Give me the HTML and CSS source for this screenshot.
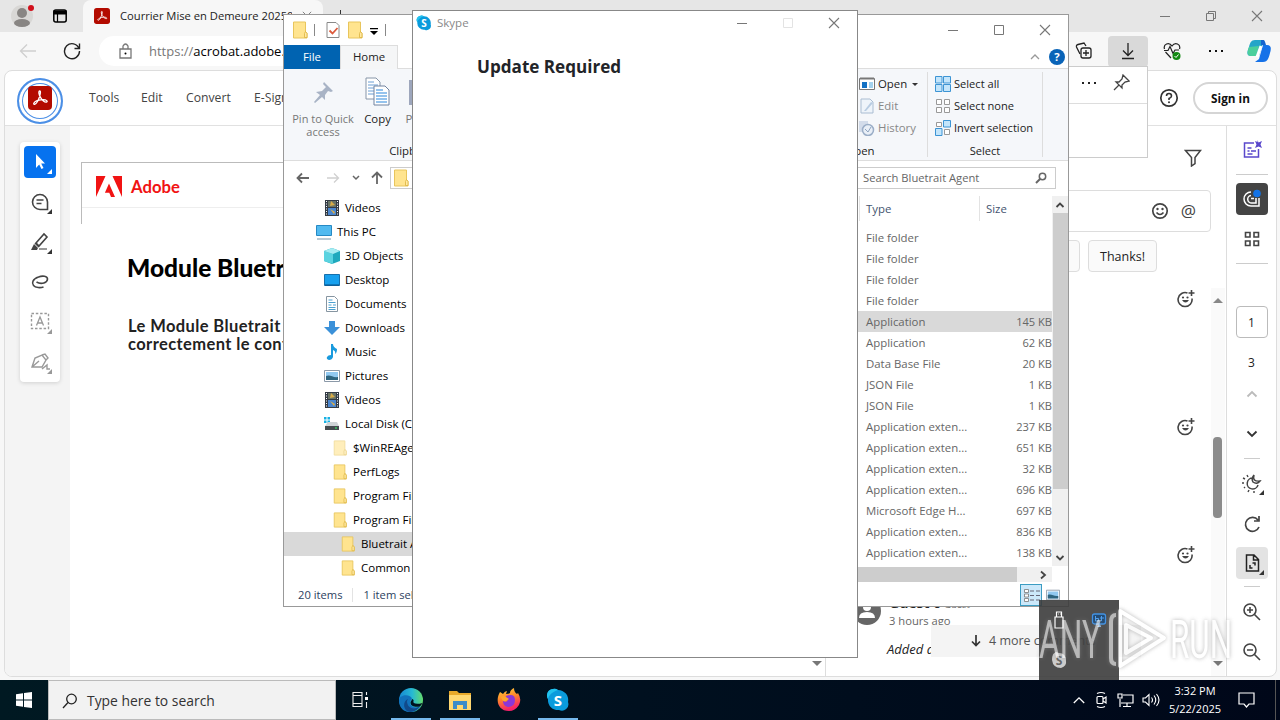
FILE: index.html
```
<!DOCTYPE html>
<html lang="en">
<head>
  <meta charset="utf-8">
  <title>Desktop</title>
  <link rel="stylesheet" href="styles.css">
</head>
<body>
<!-- shared icons -->
<svg class="sprite">
  <symbol id="folder" viewBox="0 0 16 18"><path d="M1.500 1h12v10l1.500 1v5H1.500z" fill="#ffe48f" stroke="#e8c55c"/><path d="M12.500 16.500v-4l1-2 1.500 2v4z" fill="#ffe9a5" stroke="#dcb33d" stroke-width=".8"/></symbol>
  <symbol id="acrobat" viewBox="0 0 24 24"><rect width="24" height="24" rx="4" fill="#b30b00"/><path d="M11.800 5c-1.700.2-.8 4 .7 6.300 1.500 2.500 4.300 5 6 4.700s.3-2.600-4-2.300c-4 .3-8 2-8.700 3.600s1.700 1.700 3.700-1.800c2-3.700 4-10.700 2.300-10.500z" fill="none" stroke="#fff" stroke-width="1.300"/></symbol>
  <symbol id="skype" viewBox="0 0 24 24"><path d="M7 1a6.500 6.500 0 0 1 5 1 10 10 0 0 1 10 12A6.500 6.500 0 0 1 13 22 10 10 0 0 1 2 11 6.500 6.500 0 0 1 7 1z" fill="#0a9bdc"/><path d="M7 1a6.500 6.500 0 0 1 5 1C6 4 3 7 2 11A6.500 6.500 0 0 1 7 1z" fill="#22c3ee"/><text x="12" y="17.500" text-anchor="middle" class="logo-s">S</text></symbol>
  <symbol id="video" viewBox="0 0 16 16"><path d="M1 0h14v16H1z" fill="#333b45"/><path d="M4 1h8v6H4z" fill="#6a7465"/><path d="M4 8h8v7H4z" fill="#4a86cf"/><path d="M7 1l4 4-5 1zM6 9l5 3-1 2z" fill="#d9ac47"/><path d="M2.500 1v15M13.500 1v15" stroke="#fff" stroke-dasharray="1 1.500"/></symbol>
  <symbol id="picture" viewBox="0 0 16 16"><path d="M.5 2.500h15v11H.5z" fill="#fff" stroke="#8b99a8"/><path d="M2 4h12v8H2z" fill="#91c9f1"/><path d="M2 8c4-2 7 2 12 1v3H2z" fill="#2e6580"/></symbol>
  <symbol id="smile" viewBox="0 0 18 18"><g fill="none" stroke="#444" stroke-width="1.700"><circle cx="9" cy="9" r="7.200"/><path d="M5.500 10.500q3.500 4 7 0"/></g><circle cx="6.500" cy="7" r="1.200" fill="#444"/><circle cx="11.500" cy="7" r="1.200" fill="#444"/></symbol>
  <symbol id="react" viewBox="0 0 18 18"><g fill="none" stroke="#444" stroke-width="1.600"><path d="M10.500 3A7 7 0 1 0 15 8.500M14.500 0v6M11.500 3h6"/></g><path d="M5 10h7q-3.500 5-7 0z" fill="#444"/><circle cx="6" cy="7.500" r="1.100" fill="#444"/><circle cx="10.500" cy="7.500" r="1.100" fill="#444"/></symbol>
  <symbol id="min" viewBox="0 0 12 12"><path d="M1 6.500h10" stroke="#777"/></symbol>
  <symbol id="max" viewBox="0 0 12 12"><path d="M1.500 1.500h9v9h-9z" fill="none" stroke="#777"/></symbol>
  <symbol id="close" viewBox="0 0 12 12"><path d="M1 1l10 10M11 1L1 11" stroke="#777" stroke-width="1.100"/></symbol>
  <symbol id="corner" viewBox="0 0 5 5"><path d="M5 0v5H0z" fill="currentColor"/></symbol>
</svg>

<div class="desktop">

  <!-- browser -->
  <div class="edge">
    <div class="tabs">
      <svg class="profile" viewBox="0 0 24 24"><circle cx="11" cy="12" r="11" fill="#d8d7d5"/><circle cx="11" cy="9" r="5" fill="#888583"/><ellipse cx="11" cy="19" rx="8" ry="4" fill="#888583"/><circle cx="20" cy="4" r="3" fill="#d1101c"/></svg>
      <svg class="tabicon" viewBox="0 0 14 14"><rect x=".8" y="1" width="12.400" height="12" rx="2" fill="none" stroke="#000" stroke-width="1.500"/><path d="M1 2h12v3H1zM4.500 4v9" stroke="#000" stroke-width="1.200"/></svg>
      <div class="tab">
        <svg width="16" height="16"><use href="#acrobat"/></svg>
        <span>Courrier Mise en Demeure 20250</span>
        <svg class="tab-close" viewBox="0 0 12 12"><use href="#close"/></svg>
      </div>
      <svg class="newtab" width="12" height="12" viewBox="0 0 12 12"><path d="M6.500 0v12M1 6.500h11" stroke="#333"/></svg>
      <div class="edge-controls">
        <svg width="12" height="12"><use href="#min"/></svg>
        <svg width="12" height="12" viewBox="0 0 12 12"><path d="M1.500 3.500h7v7h-7zM3.500 3V1.500h7v7H9" fill="none" stroke="#777"/></svg>
        <svg width="12" height="12"><use href="#close"/></svg>
      </div>
    </div>

    <div class="toolbar">
      <svg class="back" viewBox="0 0 18 16"><path d="M17 8H2M8 1.500L1.500 8 8 14.500" fill="none" stroke="#cfcfcf" stroke-width="1.300"/></svg>
      <svg class="reload" viewBox="0 0 18 18"><path d="M16 6.500A7.500 7.500 0 1 0 16.500 9M16.500 1.500v5h-5" fill="none" stroke="#222" stroke-width="1.400"/></svg>
      <div class="address">
        <svg width="13" height="16" viewBox="0 0 13 16"><path d="M1 6h11v9H1zM4 6V3q2.500-4 5 0v3" fill="none" stroke="#777" stroke-width="1.300"/><circle cx="6.500" cy="10.500" r="1"/></svg>
        <span>https://<b>acrobat.adobe.com</b></span>
      </div>
      <div class="actions">
        <div class="action"><svg width="18" height="18" viewBox="0 0 18 18"><g fill="none" stroke="#222" stroke-width="1.300"><rect x="6" y="6" width="10" height="10" rx="2"/><path d="M11 8v6M8 11h6M5 12L1.500 5Q1 3 3 2.500l6-1.500 2 3"/></g></svg></div>
        <div class="action on"><svg width="18" height="18" viewBox="0 0 18 18"><path d="M9 1v12M4 8.500l5 5 5-5M3 16.500h12" fill="none" stroke="#222" stroke-width="1.300"/></svg></div>
        <div class="action"><svg width="18" height="18" viewBox="0 0 18 18"><path d="M8 16L2.500 10M1.500 7C0 2 6-.5 9 4c3-4.500 9-2 7.500 3M1 8.500h4l2-4 3 7 2-3.500h4" fill="none" stroke="#222" stroke-width="1.200"/><circle cx="13.500" cy="14" r="4" fill="#138a13"/><path d="M11.500 14l1.500 1.500 2.500-3" fill="none" stroke="#fff"/></svg></div>
        <div class="action"><svg width="18" height="18" viewBox="0 0 18 18"><path d="M2 9h2M8 9h2M14 9h2" stroke="#111" stroke-width="2"/></svg></div>
        <div class="action"><svg width="24" height="24" viewBox="0 0 24 24"><path d="M8 1h9l-5 16H4c-5 0-4-4-2-9 1-4 2-7 6-7z" fill="#25a5c9"/><path d="M2 8l10-1-3 10H4c-4 0-4-4-2-9z" fill="#4bcf9c"/><path d="M16 6h4c5 0 4 5 3 8-1 4-2 9-7 9H8l4-3z" fill="#1672e8"/><path d="M14 1h2c2 0 2 2 3 5h-5z" fill="#1464ce"/><path d="M14 7l-4 11" stroke="#fff" stroke-width="3"/></svg></div>
      </div>
    </div>

    <div class="app">
      <div class="app-header">
        <div class="app-logo"><svg width="24" height="24"><use href="#acrobat"/></svg></div>
        <span class="m-tools">Tools</span><span class="m-edit">Edit</span><span class="m-convert">Convert</span><span class="m-sign">E-Sign</span>
        <div class="account">
          <svg width="20" height="20" viewBox="0 0 20 20"><circle cx="10" cy="10" r="8.200" fill="none" stroke="#333" stroke-width="1.700"/><path d="M7.500 8q0-2.500 2.500-2.500T12.500 8q0 1.500-2.500 2.500v1.500" fill="none" stroke="#333" stroke-width="1.600"/><circle cx="10" cy="14.200" r="1" fill="#333"/></svg>
          <div class="signin">Sign in</div>
        </div>
      </div>

      <div class="app-body">
        <div class="rail">
          <div class="tools">
            <div class="tool active"><svg viewBox="0 0 20 20"><path d="M6 2v14l3.200-3.500L11.500 17l2-1-2.300-4.500H15z" fill="#fff"/></svg><svg class="corner"><use href="#corner"/></svg></div>
            <div class="tool"><svg viewBox="0 0 20 20"><path d="M10 2.500a7.500 7.500 0 1 0 0 15h7.500V10A7.500 7.500 0 0 0 10 2.500zM6.500 8h7M6.500 11.500h5" fill="none" stroke="#444" stroke-width="1.600"/></svg><svg class="corner"><use href="#corner"/></svg></div>
            <div class="tool"><svg viewBox="0 0 20 20"><path d="M6 11l8-9 3 3-8 9zM5 11l4 4" fill="none" stroke="#444" stroke-width="1.600"/><path d="M4 12l4 4-1 2H1z" fill="#444"/><path d="M9 17h8" stroke="#999" stroke-width="2"/></svg><svg class="corner"><use href="#corner"/></svg></div>
            <div class="tool"><svg viewBox="0 0 20 20"><path d="M6.500 10c5 3 11 .5 11-3 0-3-5-3.500-9-2-6 2-7 6-5 8.500 2 2.500 7 2.500 10 1.500" fill="none" stroke="#444" stroke-width="1.600"/></svg></div>
            <div class="tool off"><svg viewBox="0 0 20 20"><path d="M1.500 1.500h17v15h-17z" fill="none" stroke="#999" stroke-width="1.400" stroke-dasharray="2.500 1.800"/><path d="M6.500 13.500L10 5l3.500 8.500M7.500 11h5" fill="none" stroke="#999" stroke-width="1.300"/></svg><svg class="corner"><use href="#corner"/></svg></div>
            <div class="tool off"><svg viewBox="0 0 20 20"><path d="M2 15L5 6l7-3 4 5-4 7zM2 15l7-6M12 3l3-1 3 4-2 2M12 17l5-4v4h3" fill="none" stroke="#999" stroke-width="1.400"/></svg><svg class="corner"><use href="#corner"/></svg></div>
          </div>
        </div>

        <div class="document">
          <div class="sheet">
            <div class="brand"><svg width="26" height="21" viewBox="0 0 26 21"><path d="M0 0h9.500L0 21zM16.500 0H26v21zM13 7.500L19 21h-4l-1.700-4.200H8.900z" fill="#f11313"/></svg>Adobe</div>
          </div>
          <div class="doc-title">Module Bluetrait</div>
          <div class="doc-text">Le Module Bluetrait permet<br>correctement le contenu</div>
        </div>

        <div class="comments">
          <svg class="filter" viewBox="0 0 18 18"><path d="M1.500 1.500h15L11 8.500v6L7.500 17V8.500z" fill="none" stroke="#444" stroke-width="1.500"/></svg>
          <div class="reply"><svg width="18" height="18"><use href="#smile"/></svg><span>@</span></div>
          <div class="chips"><div class="chip"></div><div class="chip">Thanks!</div></div>
          <div class="reactions">
            <svg><use href="#react"/></svg><svg><use href="#react"/></svg><svg><use href="#react"/></svg>
          </div>
          <div class="comment-scroll"><i class="up"></i><i class="thumb"></i><i class="down"></i></div>
          <div class="guest">
            <svg width="28" height="28" viewBox="0 0 28 28"><circle cx="14" cy="14" r="14" fill="#666"/><circle cx="14" cy="10" r="4" fill="#fff"/><path d="M6 21q0-6 8-6t8 6z" fill="#fff"/></svg>
            <div><b>Guest 0</b> <small>Guest</small><br><span>3 hours ago</span><p>Added a</p></div>
          </div>
          <div class="more">
            <svg width="12" height="12" viewBox="0 0 12 12"><path d="M6 0v10M2 6.500l4 4 4-4" fill="none" stroke="#333" stroke-width="1.700"/></svg>4 more comments
          </div>
        </div>

        <div class="siderail">
          <div class="side"><svg viewBox="0 0 20 20"><path d="M12 3H2.500v14h14V9M5.500 8h4M5.500 11h2M9 11h5M5.500 14h5" fill="none" stroke="#5a48cc" stroke-width="1.500"/><path d="M15.500 0l1 2.500L20 1l-1.500 3.500L20 8l-3.500-1.500L13 8l1.500-3.500L13 1l2.500 1z" fill="#5a48cc"/></svg></div>
          <hr class="h1">
          <div class="side dark"><svg viewBox="0 0 20 20"><path d="M9 3a7 7 0 0 0 0 14h8V9M9 6.500a3.700 3.700 0 0 0 1 7.500h4V9M9 9.500h3" fill="none" stroke="#fff" stroke-width="1.500"/><circle cx="15" cy="4.500" r="3.800" fill="#1473e6"/></svg></div>
          <div class="side grid4"><svg viewBox="0 0 20 20"><path d="M3.500 3.500h4.500v4.500H3.500zM12 3.500h4.500v4.500H12zM3.500 12h4.500v4.500H3.500zM12 12h4.500v4.500H12z" fill="none" stroke="#444" stroke-width="1.600"/></svg></div>
          <hr class="h2">
          <div class="page-no">1</div>
          <div class="pages">3</div>
          <svg class="chev" viewBox="0 0 12 8"><path d="M1.500 6.500L6 2l4.500 4.500" fill="none" stroke="#bbb" stroke-width="1.800"/></svg>
          <svg class="chev dn" viewBox="0 0 12 8"><path d="M1.500 1.500L6 6l4.500-4.500" fill="none" stroke="#333" stroke-width="1.800"/></svg>
          <hr class="short">
          <div class="side"><svg viewBox="0 0 20 20"><path d="M11 5a5.500 5.500 0 1 0 5 7M12 2q-2 7 6 6-3 4-7 1-2-3 1-7z" fill="none" stroke="#444" stroke-width="1.500"/><path d="M5 2l1 2M1 5l2 1M0 10h2M2 15l1-1M6 19l1-2M12 18v2" stroke="#444" stroke-width="1.400"/></svg><svg class="corner"><use href="#corner"/></svg></div>
          <div class="side refresh"><svg viewBox="0 0 20 20"><path d="M16 6A7 7 0 1 0 17 13M17 2v5h-5" fill="none" stroke="#444" stroke-width="1.700"/></svg></div>
          <div class="side fit"><svg viewBox="0 0 20 20"><path d="M4.500 2h7.500l4.500 4.500V18h-12zM11.500 2.500v4.500h4.500M8 12v3h2.500M13 12.500V10h-2.500" fill="none" stroke="#222" stroke-width="1.500"/></svg><svg class="corner"><use href="#corner"/></svg></div>
          <hr class="short">
          <div class="side"><svg viewBox="0 0 20 20"><path d="M12.500 12.500L18 18M5 8h6M8 5v6" stroke="#444" stroke-width="1.600"/><circle cx="8" cy="8" r="6" fill="none" stroke="#444" stroke-width="1.600"/></svg></div>
          <div class="side"><svg viewBox="0 0 20 20"><path d="M12.500 12.500L18 18M5 8h6" stroke="#444" stroke-width="1.600"/><circle cx="8" cy="8" r="6" fill="none" stroke="#444" stroke-width="1.600"/></svg></div>
        </div>
      </div>
    </div>
    <i class="doc-down"></i>

    <!-- downloads flyout -->
    <div class="flyout">
      <div class="flyout-head">
        <svg width="14" height="4" viewBox="0 0 14 4"><path d="M0 2h2M6 2h2M12 2h2" stroke="#222" stroke-width="2"/></svg>
        <svg width="17" height="17" viewBox="0 0 17 17"><path d="M10 1l6 6-4 1-3 3v3L3 8h3l3-3zM6 11l-5 5" fill="none" stroke="#444" stroke-width="1.300"/></svg>
      </div>
    </div>
  </div>

  <!-- file explorer -->
  <div class="explorer">
    <div class="ex-title">
      <svg width="16" height="18"><use href="#folder"/></svg><i class="sep"></i>
      <svg class="check" width="14" height="16" viewBox="0 0 14 16"><path d="M1 .5h9l3 3v12H1z" fill="#fff" stroke="#888"/><path d="M3.500 8.500l3 3 5-5.500" fill="none" stroke="#dc5a3c" stroke-width="1.800"/></svg>
      <svg width="16" height="18"><use href="#folder"/></svg>
      <svg class="drop" width="8" height="8" viewBox="0 0 8 8"><path d="M0 0h8v1.300H0zM0 3h8L4 7z"/></svg><i class="sep last"></i>
      <div class="controls"><svg><use href="#min"/></svg><svg><use href="#max"/></svg><svg><use href="#close"/></svg></div>
    </div>
    <div class="ex-tabs"><span class="file">File</span><span class="home">Home</span>
      <div class="ex-help"><svg width="10" height="7" viewBox="0 0 10 7"><path d="M1 6l4-4 4 4" fill="none" stroke="#999" stroke-width="1.300"/></svg><b>?</b></div>
    </div>
    <div class="ribbon">
      <div class="group clip">
        <div class="big pin"><svg width="22" height="24" viewBox="0 0 22 24"><path d="M12 1l9 9-2 1-3-1-3 4v5l-3-3-7 6-1-1 6-7-4-3 6-1 4-4-3-3z" fill="#a8b3c5"/></svg>Pin to Quick<br>access</div>
        <div class="big copy"><svg width="26" height="30" viewBox="0 0 26 30"><path d="M1 1h10l4 4v17H1z" fill="#fff" stroke="#8695a8"/><path d="M3 8h10M3 11h10M3 14h10M3 17h10M3 5h6" stroke="#6a9ed4"/><path d="M9 9h11l4 4v15H9z" fill="#fff" stroke="#7083a0"/><path d="M11 16h11M11 19h11M11 22h11M11 25h11M11 13h7" stroke="#2c87dc" stroke-width="1.200"/></svg>Copy</div>
        <div class="big paste"><svg width="22" height="30" viewBox="0 0 22 30"><path d="M0 3h22v25H0z" fill="#9da6bc"/></svg>Paste</div>
        <div class="caption">Clipboard</div>
      </div>
      <div class="group open">
        <div class="cmd"><svg viewBox="0 0 16 16"><path d="M.5 2.500h15v11H.5z" fill="#fff" stroke="#777"/><path d="M1 2.500h14" stroke="#777" stroke-width="2"/><path d="M3 6h5v6H3z" fill="#1572c4"/><path d="M10 7h4M10 9h4M10 11h4" stroke="#49a5de"/></svg>Open <i></i></div>
        <div class="cmd dim"><svg viewBox="0 0 16 16"><path d="M2 1h9l3 3v11H2z" fill="#eef4fa" stroke="#aabdd2"/><path d="M5 13l7-9 2 1-7 8z" fill="#b8cce2"/></svg>Edit</div>
        <div class="cmd dim"><svg viewBox="0 0 16 16"><path d="M0 1h9v11H0z" fill="#d3dcea"/><circle cx="9" cy="10" r="5.500" fill="#e9eff7" stroke="#9baec7" stroke-width="1.500"/><path d="M6 9l3 3 3-5" fill="none" stroke="#8fa5c1"/></svg>History</div>
        <div class="caption">Open</div>
      </div>
      <div class="group select">
        <div class="cmd"><svg viewBox="0 0 16 16"><path d="M.5.5h6.500v6.500H.5zM8.500.5h7v6.500h-7zM.5 8.500h6.500v7H.5zM8.500 8.500h7v7h-7z" fill="#c3e5fb" stroke="#3c94d4"/></svg>Select all</div>
        <div class="cmd"><svg viewBox="0 0 16 16"><path d="M1.500 1.500h5v5h-5zM9.500 1.500h5v5h-5zM1.500 9.500h5v5h-5zM9.500 9.500h5v5h-5z" fill="#fff" stroke="#999"/></svg>Select none</div>
        <div class="cmd"><svg viewBox="0 0 16 16"><path d="M1.500 2.500h5v4h-5zM9.500 9.500h5v5h-5z" fill="#fff" stroke="#999"/><path d="M8.500.5h7v6.500h-7zM.5 8.500h6.500v7H.5z" fill="#c3e5fb" stroke="#3c94d4"/></svg>Invert selection</div>
        <div class="caption">Select</div>
      </div>
    </div>
    <div class="nav">
      <svg width="14" height="12" viewBox="0 0 14 12"><path d="M13 6H2M6 1.500L1.500 6 6 10.500" fill="none" stroke="#666" stroke-width="1.800"/></svg>
      <svg class="fwd" width="14" height="12" viewBox="0 0 14 12"><path d="M1 6h11M8 1.500L12.500 6 8 10.500" fill="none" stroke="#d0d0d0" stroke-width="1.300"/></svg>
      <svg class="recent" width="8" height="6" viewBox="0 0 8 6"><path d="M1 1l3 3 3-3" fill="none" stroke="#666" stroke-width="1.500"/></svg>
      <svg class="upper" width="12" height="14" viewBox="0 0 12 14"><path d="M6 13V2M1 6.500l5-5 5 5" fill="none" stroke="#666" stroke-width="1.800"/></svg>
      <div class="path"><svg width="16" height="18"><use href="#folder"/></svg></div>
      <div class="search"><span>Search Bluetrait Agent</span><svg width="12" height="12" viewBox="0 0 12 12"><circle cx="7.500" cy="4.500" r="3.200" fill="none" stroke="#666" stroke-width="1.500"/><path d="M5 7L1 11" stroke="#666" stroke-width="1.900"/></svg></div>
    </div>
    <div class="panes">
      <div class="tree">
        <div class="node"><svg><use href="#video"/></svg>Videos</div>
        <div class="node root"><svg viewBox="0 0 16 16"><path d="M.5 1.500h15v10H.5z" fill="#51baf0" stroke="#2689c4"/><path d="M1 15h14" stroke="#7594a9"/></svg>This PC</div>
        <div class="node"><svg viewBox="0 0 16 16"><path d="M8 0l8 3v10l-8 3-8-3V3z" fill="#1fa9bd"/><path d="M0 3l9 3v10l-9-3z" fill="#5ad3e0"/><path d="M8 0l8 3-7 3-9-3z" fill="#a5ecf2"/></svg>3D Objects</div>
        <div class="node"><svg viewBox="0 0 16 16"><path d="M.5 2.500h15v11H.5z" fill="#17a0ee" stroke="#1770ac"/><path d="M1 13h14" stroke="#064e85"/></svg>Desktop</div>
        <div class="node"><svg viewBox="0 0 16 16"><path d="M2.500.5h8l3 3v12h-11z" fill="#fff" stroke="#8695a1"/><path d="M4.500 4h4M4.500 6.500h7M4.500 9h3M9 9h3M4.500 11.500h7M4.500 13.500h7" stroke="#4aa0d0"/></svg>Documents</div>
        <div class="node"><svg viewBox="0 0 16 16"><path d="M5 1h6v6h5l-8 8-8-8h5z" fill="#3b91d9"/></svg>Downloads</div>
        <div class="node"><svg viewBox="0 0 16 16"><path d="M7 0h2q0 3 4 5 0 4-2 5 1-3-2-4v7q-1 3-4 3-3-1-2-3 1-2 4-2z" fill="#199add"/></svg>Music</div>
        <div class="node"><svg><use href="#picture"/></svg>Pictures</div>
        <div class="node"><svg><use href="#video"/></svg>Videos</div>
        <div class="node"><svg viewBox="0 0 16 16"><path d="M0 1h2.500v2.500H0zM3.500 1H6v2.500H3.500zM0 4.500h2.500V7H0zM3.500 4.500H6V7H3.500z" fill="#16b1e4"/><path d="M4 6h9l2 4H1z" fill="#cfd4d7"/><path d="M1 10h14v4H1z" fill="#454c50"/><path d="M11 12h2" stroke="#3f6"/></svg>Local Disk (C:)</div>
        <div class="node sub faded"><svg><use href="#folder"/></svg>$WinREAgent</div>
        <div class="node sub"><svg><use href="#folder"/></svg>PerfLogs</div>
        <div class="node sub"><svg><use href="#folder"/></svg>Program Files</div>
        <div class="node sub"><svg><use href="#folder"/></svg>Program Files (x86)</div>
        <div class="node leaf selected"><svg><use href="#folder"/></svg>Bluetrait Agent</div>
        <div class="node leaf"><svg><use href="#folder"/></svg>Common Files</div>
      </div>
      <div class="files">
        <div class="file-head"><span>Type</span><span>Size</span></div>
        <div class="row"><span>File folder</span></div>
        <div class="row"><span>File folder</span></div>
        <div class="row"><span>File folder</span></div>
        <div class="row"><span>File folder</span></div>
        <div class="row selected"><span>Application</span><span>145 KB</span></div>
        <div class="row"><span>Application</span><span>62 KB</span></div>
        <div class="row"><span>Data Base File</span><span>20 KB</span></div>
        <div class="row"><span>JSON File</span><span>1 KB</span></div>
        <div class="row"><span>JSON File</span><span>1 KB</span></div>
        <div class="row"><span>Application exten...</span><span>237 KB</span></div>
        <div class="row"><span>Application exten...</span><span>651 KB</span></div>
        <div class="row"><span>Application exten...</span><span>32 KB</span></div>
        <div class="row"><span>Application exten...</span><span>696 KB</span></div>
        <div class="row"><span>Microsoft Edge H...</span><span>697 KB</span></div>
        <div class="row"><span>Application exten...</span><span>836 KB</span></div>
        <div class="row"><span>Application exten...</span><span>138 KB</span></div>
        <div class="hscroll"><i></i><svg width="8" height="10" viewBox="0 0 8 10"><path d="M2 1.500L6 5 2 8.500" fill="none" stroke="#444" stroke-width="1.800"/></svg></div>
      </div>
      <div class="vscroll">
        <svg width="10" height="8" viewBox="0 0 10 8"><path d="M1.500 6L5 2.500 8.500 6" fill="none" stroke="#444" stroke-width="1.800"/></svg>
        <i></i>
        <svg width="10" height="8" viewBox="0 0 10 8"><path d="M1.500 2L5 5.500 8.500 2" fill="none" stroke="#444" stroke-width="1.800"/></svg>
      </div>
    </div>
    <div class="status"><span>20 items</span><i></i><span>1 item selected</span>
      <div class="views"><div class="details"><svg width="16" height="14" viewBox="0 0 16 14"><path d="M.5.500h4v3h-4zM.5 5h4v3h-4zM.5 9.500h4v3h-4z" fill="#fff" stroke="#777" stroke-width=".8"/><path d="M6 2h4M6 6.500h4M6 11h4M12 2h4M12 6.500h4M12 11h4" stroke="#667"/></svg></div><svg width="14" height="14"><use href="#picture"/></svg></div>
    </div>
  </div>

  <!-- update dialog -->
  <div class="dialog">
    <div class="dialog-title">
      <svg class="app-icon"><use href="#skype"/></svg><span>Skype</span>
      <div class="controls"><svg><use href="#min"/></svg><svg class="disabled"><use href="#max"/></svg><svg><use href="#close"/></svg></div>
    </div>
    <h1>Update Required</h1>
  </div>

  <!-- tray overflow -->
  <div class="overflow">
    <svg viewBox="0 0 16 18"><path d="M5.500 1h5v5h-5zM4 6h8v11H4z" fill="none" stroke="#fff" stroke-width="1.200"/><path d="M7 3h.8M9 3h.8" stroke="#fff"/></svg>
    <svg viewBox="0 0 16 18"><rect x="1.500" y="3" width="13" height="10" rx="2" fill="#234b73" stroke="#4292e4" stroke-width="1.300"/><path d="M4.500 5v5h3V7.500h-3M10.500 5v5M9 7h4" fill="none" stroke="#4ea1f3"/><path d="M6 16l3-3 1 3z" fill="#9dcaf5"/></svg>
    <svg viewBox="0 0 16 16"><path d="M5 0l3 1q7 0 7 8 1 5-5 7-8 0-9-8 0-7 4-8z" fill="#ccc"/><text x="8" y="12.500" text-anchor="middle" class="tray-s">S</text></svg>
  </div>
  <svg class="watermark" viewBox="0 0 200 66">
    <text x="3" y="52" textLength="62" lengthAdjust="spacingAndGlyphs">ANY</text>
    <text x="134" y="52" textLength="62" lengthAdjust="spacingAndGlyphs">RUN</text>
    <path d="M80 9q-5 0-5 7v36q0 6 5 6M84 5l44 27-44 28zM90 19l25 13-25 15z"/>
  </svg>
</div>

<div class="taskbar">
  <div class="start"><svg width="16" height="16" viewBox="0 0 16 16"><path d="M0 2.300l7-1v6.300H0zM8 1.100L16 0v7.600H8zM0 8.500h7v6.300l-7-1zM8 8.500h8V16l-8-1.100z" fill="#fff"/></svg></div>
  <div class="tb-search"><svg width="16" height="16" viewBox="0 0 16 16"><circle cx="9.500" cy="6" r="4.800" fill="none" stroke="#222" stroke-width="1.300"/><path d="M6 9.500L1 15" stroke="#222" stroke-width="1.300"/></svg>Type here to search</div>
  <div class="tb-item"><svg width="18" height="18" viewBox="0 0 18 18"><path d="M2 4.500h9v8H2zM2 4V1M11 4V1M2 13v3M11 13v3M2 1.500h9M2 15.500h9M15.500 1v3M15.500 11v6" fill="none" stroke="#eee" stroke-width="1.100"/><path d="M14 6h3v3h-3z" fill="#fff"/></svg></div>
  <div class="tb-item running"><svg width="24" height="24" viewBox="0 0 24 24"><defs><linearGradient id="eg" x2="1"><stop stop-color="#1688d3"/><stop offset=".55" stop-color="#27b9d4"/><stop offset="1" stop-color="#64dc6c"/></linearGradient></defs><circle cx="12" cy="12" r="12" fill="url(#eg)"/><path d="M0 12c1-6 12-6 13-1-3 2-3 7 2 8 3 1 6-1 7-2-3 9-22 11-22-5z" fill="#1272bc"/><path d="M8 13c0 7 7 10 13 5-4 6-9 7-13 5-4-3-4-10 1-12z" fill="#114a8b"/><path d="M11.500 14.500c0-1.500 1.500-2 1.500-3.500 1 0 2 1 1.500 2-1 2 2 4 9 2-1 2-2 3-3 3.500-4 1-9 0-9-4z" fill="#001320"/></svg></div>
  <div class="tb-item running"><svg width="24" height="20" viewBox="0 0 24 20"><path d="M1 1h8l2 2h12v17H1z" fill="#e8a92a"/><path d="M1 5h22v15H1z" fill="#ffd871"/><path d="M5 11h14v8h-4v-4H9v4H5z" fill="#3c8dc9"/></svg></div>
  <div class="tb-item"><svg width="24" height="24" viewBox="0 0 24 24"><defs><linearGradient id="fg" x2=".3" y2="1"><stop stop-color="#ffd93b"/><stop offset=".5" stop-color="#ff842b"/><stop offset="1" stop-color="#f52169"/></linearGradient></defs><path d="M3 4l3 2q2-3 4-3l-1 3q3 0 4-1 0-3 4-5 0 4 3 6l1-1q4 6 1 12-4 6-10 6C1 23-2 12 3 4z" fill="url(#fg)"/><path d="M9 8q9-3 9 4t-7 7q-5-1-5-6l3 1 2-2-3-1z" fill="#8b36d8"/><path d="M4 9q3-2 5 0l3 2-3 2q-4 1-5-4z" fill="#ffa52d"/></svg></div>
  <div class="tb-item running"><svg width="24" height="24"><use href="#skype"/></svg></div>
  <div class="tray">
    <svg width="12" height="8" viewBox="0 0 12 8"><path d="M.8 7L6 1.800 11.200 7" fill="none" stroke="#fff" stroke-width="1.300"/></svg>
    <svg width="16" height="18" viewBox="0 0 16 18"><rect x="4" y="5.500" width="6" height="7" rx="1" fill="none" stroke="#fff" stroke-width="1.200"/><path d="M10 8l3-2v6l-3-2M4 2.500q4-2 8 0M4 15.500q4 2 8 0" fill="none" stroke="#fff" stroke-width="1.200"/></svg>
    <svg width="17" height="16" viewBox="0 0 17 16"><path d="M6 3h10v8H4M10 11v3M6 14.500h8M3 7v8M1 2h4v4H1z" fill="none" stroke="#fff" stroke-width="1.200"/></svg>
    <svg width="18" height="14" viewBox="0 0 18 14"><path d="M1 5h2.500L7 1.500v11L3.500 9H1zM9.500 4.500q2 2.500 0 5M12 2.500q3.500 4.500 0 9M14.500 1q5 6 0 12" fill="none" stroke="#fff" stroke-width="1.100"/></svg>
    <div class="clock">3:32 PM<br>5/22/2025</div>
    <svg class="notes" width="17" height="16" viewBox="0 0 17 16"><path d="M1 1h15v11h-5l-2.500 3L6 12H1z" fill="none" stroke="#fff" stroke-width="1.200"/></svg>
  </div>
</div>
</body>
</html>
```
FILE: styles.css
```
* {
  box-sizing: border-box;
}

body {
  margin: 0;
  width: 1280px;
  height: 720px;
  overflow: hidden;
  font: 12px/16px "Open Sans", "Noto Sans", sans-serif;
  color: #222;
}

svg {
  flex: none;
  display: block;
}

i {
  display: block;
  flex: none;
}

.sprite {
  display: none;
}

.logo-s {
  font: bold 15px "Open Sans", sans-serif;
  fill: #fff;
}

.desktop {
  position: relative;
  height: 680px;
  overflow: hidden;
}

/* browser */
.edge {
  height: 680px;
  background: #f7f7f7;
}

.tabs {
  display: flex;
  height: 32px;
  align-items: center;
  background: #e6e6e6;
}

.profile {
  width: 24px;
  height: 24px;
  margin-left: 11px;
}

.tabicon {
  width: 14px;
  height: 14px;
  margin: 0 16px 0 18px;
}

.tab {
  display: flex;
  align-items: center;
  gap: 10px;
  width: 240px;
  height: 32px;
  padding: 0 11px;
  background: #f7f7f7;
  border-radius: 8px 8px 0 0;
}

.tab span {
  width: 172px;
  overflow: hidden;
  white-space: nowrap;
  font-size: 11.2px;
}

.tab-close {
  width: 10px;
  height: 10px;
}

.newtab {
  margin-left: 11px;
}

.edge-controls {
  display: flex;
  gap: 34px;
  margin-left: auto;
  margin-right: 17px;
}

.toolbar {
  display: flex;
  align-items: center;
  height: 38px;
}

.back {
  width: 18px;
  height: 16px;
  margin-left: 19px;
}

.reload {
  width: 18px;
  height: 18px;
  margin-left: 26px;
}

.address {
  display: flex;
  align-items: center;
  gap: 17px;
  width: 700px;
  height: 30px;
  margin-left: 18px;
  padding-left: 20px;
  background: #fff;
  border-radius: 15px;
  font-size: 13px;
  color: #777;
}

.address b {
  font-weight: normal;
  color: #000;
}

.actions {
  display: flex;
  margin-left: auto;
  gap: 4px;
}

.action {
  display: flex;
  align-items: center;
  justify-content: center;
  width: 40px;
  height: 31px;
  border-radius: 4px;
}

.action.on {
  background: #d9d9d9;
}

.action:last-child {
  width: 37px;
  margin-right: 3px;
}

.app {
  display: flex;
  flex-direction: column;
  height: 607px;
  margin: 0 3px 0 4px;
  background: #fff;
  border: 1px solid #ddd;
  border-radius: 8px;
  overflow: hidden;
}

.app-header {
  display: flex;
  align-items: center;
  height: 55px;
  flex: none;
  border-bottom: 1px solid #e1e1e1;
  font-size: 12.2px;
  color: #444;
}

.app-logo {
  display: flex;
  align-items: center;
  justify-content: center;
  width: 46px;
  height: 46px;
  margin: 5px 0 0 12px;
  border: 2px solid #4b8fe6;
  border-radius: 50%;
  box-shadow: inset 0 0 0 3px #fff, inset 0 0 0 4px #4b8fe6;
}

.app-logo svg {
  margin-top: -6px;
}

.app-header span {
  flex: none;
}

.m-tools { width: 52px; margin-left: 26px; }
.m-edit { width: 45px; }
.m-convert { width: 68px; }

.account {
  display: flex;
  align-items: center;
  gap: 14px;
  margin-left: auto;
  margin-right: 8px;
}

.signin {
  width: 75px;
  height: 32px;
  border: 2px solid #d5d5d5;
  border-radius: 16px;
  line-height: 28px;
  text-align: center;
  color: #111;
  font-weight: bold;
  font-size: 11.8px;
}

.app-body {
  display: flex;
  flex: 1;
  min-height: 0;
}

.rail {
  width: 65px;
  flex: none;
  padding: 16px 0 0 15px;
  background: #f4f4f4;
}

.tools {
  width: 40px;
  height: 240px;
  padding: 4px;
  display: flex;
  flex-direction: column;
  gap: 8px;
  background: #fff;
  border-radius: 4px;
  box-shadow: 0 1px 4px rgba(0,0,0,.15);
}

.tool, .side {
  position: relative;
  display: flex;
  align-items: center;
  justify-content: center;
  width: 32px;
  height: 32px;
  flex: none;
  border-radius: 4px;
  color: #333;
}

.tool > svg, .side > svg {
  width: 20px;
  height: 20px;
}

.tool > .corner, .side > .corner {
  position: absolute;
  right: 4px;
  bottom: 4px;
  width: 5px;
  height: 5px;
}

.tool.active {
  background: #0672ef;
  color: #fff;
}

.tool.off {
  color: #999;
}

.document {
  width: 755px;
  flex: none;
  overflow: hidden;
}

.sheet {
  height: 62px;
  margin: 36px 0 0 11px;
  border: solid #bbb;
  border-width: 1px 0 0 1px;
}

.brand {
  display: flex;
  align-items: center;
  gap: 9px;
  height: 45px;
  padding: 3px 0 0 14px;
  border-bottom: 1px solid #eee;
  font: bold 16.7px/20px Lato, sans-serif;
  color: #f11313;
}

.doc-title {
  margin: 29px 0 0 57px;
  font: 900 24.5px/30px Lato, sans-serif;
  color: #000;
}

.doc-text {
  margin: 34px 0 0 58px;
  font: bold 16.5px/18px Lato, sans-serif;
  letter-spacing: .4px;
  color: #222;
}

.comments {
  position: relative;
  flex: 1;
  border-left: 1px solid #ddd;
}

.filter {
  width: 18px;
  height: 18px;
  margin: 23px 0 0 358px;
}

.reply {
  display: flex;
  align-items: center;
  justify-content: flex-end;
  gap: 12px;
  height: 42px;
  margin: 23px 15px 0 20px;
  padding-right: 14px;
  border: 1px solid #ddd;
  border-radius: 4px;
  font-size: 17px;
  color: #444;
}

.chips {
  display: flex;
  justify-content: flex-end;
  gap: 8px;
  margin: 8px 69px 0 0;
}

.chip {
  width: 69px;
  height: 32px;
  border: 1px solid #ddd;
  border-radius: 4px;
  background: #fafafa;
  font-size: 12.5px;
  line-height: 31px;
  text-align: center;
}

.reactions {
  display: flex;
  flex-direction: column;
  gap: 110px;
  margin: 18px 0 0 351px;
}

.reactions svg {
  width: 18px;
  height: 18px;
}

/* lies over the right edge of the comment list */
.comment-scroll {
  position: absolute;
  top: 162px;
  right: 1px;
  bottom: 0;
  width: 14px;
  background: #fafafa;
}

.up, .down, .doc-down {
  width: 0;
  height: 0;
  border: 5px solid transparent;
}

.up {
  margin: 10px auto 0 2px;
  border-bottom-color: #888;
  border-top: 0;
}

.thumb {
  width: 9px;
  height: 81px;
  margin: 134px 0 0 2px;
  border-radius: 4px;
  background: #8b8b8b;
}

.down {
  margin: 143px 0 0 2px;
  border-top-color: #777;
  border-bottom: 0;
}

.guest {
  display: flex;
  gap: 8px;
  margin: 33px 0 0 27px;
  font-size: 11.2px;
  color: #666;
}

.guest b {
  font-size: 14px;
  color: #222;
}

.guest div {
  margin-top: -2px;
}

.guest p {
  margin: 12px 0 0 -2px;
  font-size: 13px;
  font-style: italic;
  color: #222;
}

/* covers the tail of the last comment */
.more {
  position: absolute;
  left: 105px;
  bottom: 19px;
  width: 210px;
  height: 32px;
  display: flex;
  align-items: center;
  gap: 7px;
  padding-left: 39px;
  background: #f4f4f4;
  color: #555;
  font-size: 12.5px;
}

.siderail {
  width: 50px;
  flex: none;
  display: flex;
  flex-direction: column;
  align-items: center;
  padding-top: 8px;
  border-left: 1px solid #ddd;
}

.siderail hr {
  width: 32px;
  margin: 8px 0;
  border: 0;
  border-top: 1px solid #ccc;
}

.siderail .h2 { margin: 8px 0 42px; }
.siderail .short { width: 16px; margin: 7px 0 8px; }
.grid4 { margin-top: 8px; }
.side.dark { background: #444; }

.page-no {
  width: 32px;
  height: 32px;
  border: 1px solid #bbb;
  border-radius: 4px;
  text-align: center;
  line-height: 31px;
}

.pages {
  margin: 17px 0 19px;
}

.chev {
  width: 12px;
  height: 8px;
}

.chev.dn {
  margin: 32px 0 13px;
}

.refresh { margin-top: 9px; }
.fit { margin-top: 7px; }
.fit + .short { margin-bottom: 9px; }
.side.fit { background: #e3e3e3; }
.fit ~ .side:last-child { margin-top: 8px; }

.doc-down {
  position: absolute;
  left: 812px;
  top: 661px;
  border-top-color: #777;
  border-bottom: 0;
}

.flyout {
  position: absolute;
  left: 860px;
  top: 66px;
  width: 288px;
  height: 92px;
  background: #fff;
  border: 1px solid #ccc;
}

.flyout-head {
  display: flex;
  align-items: center;
  justify-content: flex-end;
  gap: 17px;
  height: 37px;
  padding: 0 17px 5px 0;
  border-bottom: 1px solid #ddd;
}

/* file explorer */
.explorer {
  position: absolute;
  left: 283px;
  top: 14px;
  width: 786px;
  height: 593px;
  display: flex;
  flex-direction: column;
  background: #fff;
  border: 1px solid #999;
  font-size: 11.4px;
}

.ex-title {
  display: flex;
  align-items: center;
  height: 30px;
  padding: 0 0 1px 8px;
}

.sep {
  width: 1px;
  height: 12px;
  margin: 0 11px 0 6px;
  background: #888;
}

.check { margin-right: 7px; }
.drop { margin: 4px 7px 0 7px; }
.sep.last { margin: 0; }

.controls {
  display: flex;
  gap: 34px;
  margin-left: auto;
  margin-right: 17px;
}

.controls svg {
  width: 12px;
  height: 12px;
}

.ex-tabs {
  display: flex;
  height: 24px;
  border-bottom: 1px solid #ddd;
}

.file, .home {
  width: 56px;
  height: 24px;
  line-height: 24px;
  text-align: center;
  background: #0063b1;
  color: #fff;
}

.home {
  width: 58px;
  line-height: 22px;
  border: 1px solid #ddd;
  border-bottom: 0;
  background: #f5f6f7;
  color: #222;
}

.ex-help {
  display: flex;
  align-items: center;
  gap: 9px;
  margin: 0 3px 0 auto;
}

.ex-help b {
  width: 16px;
  height: 16px;
  border-radius: 50%;
  background: #0a64b8;
  color: #fff;
  text-align: center;
}

.ribbon {
  display: flex;
  height: 92px;
  flex: none;
  padding-right: 25px;
  background: #f5f7fa;
  border-bottom: 1px solid #ddd;
}

.group {
  position: relative;
  margin: 3px 0;
  padding-top: 1px;
  border-right: 1px solid #ddd;
}

.clip {
  display: flex;
  width: 240px;
  text-align: center;
  line-height: 13px;
}

.big svg {
  margin: 4px auto 5px;
}

.pin { width: 78px; color: #777; font-size: 11px; }
.pin svg { margin: 8px auto 7px; }
.copy { width: 31px; }
.paste { width: 54px; color: #777; }

.caption {
  position: absolute;
  left: 0;
  right: 0;
  bottom: -2px;
  text-align: center;
  line-height: 16px;
}

.clip .caption { padding-left: 23px; }

.open {
  margin-left: auto;
  width: 130px;
  padding-left: 61px;
}

.open .caption { right: 5px; }

.select {
  width: 115px;
  padding-left: 7px;
  font-size: 11.1px;
}

.cmd {
  display: flex;
  align-items: center;
  gap: 3px;
  height: 22px;
  white-space: nowrap;
}

.cmd svg {
  width: 16px;
  height: 16px;
}

.cmd i {
  margin-left: 2px;
  border: 3px solid transparent;
  border-top-color: #333;
  border-bottom: 0;
}

.cmd.dim {
  color: #888;
}

.nav {
  display: flex;
  align-items: center;
  height: 35px;
  flex: none;
  padding: 0 12px 2px 12px;
}

.fwd { margin-left: 16px; }
.recent { margin-left: 12px; }
.upper { margin-left: 11px; }

.path {
  width: 440px;
  height: 22px;
  margin-left: 7px;
  padding: 1px 2px;
  border: 1px solid #ccc;
}

.search {
  display: flex;
  align-items: center;
  justify-content: space-between;
  width: 204px;
  height: 22px;
  margin-left: auto;
  padding: 0 8px 0 10px;
  border: 1px solid #ccc;
  color: #666;
  font-size: 11.2px;
}

.panes {
  display: flex;
  height: 387px;
  overflow: hidden;
}

.tree {
  width: 210px;
  font-size: 11.5px;
}

.node {
  display: flex;
  align-items: center;
  gap: 5px;
  height: 24px;
  padding-left: 40px;
  white-space: nowrap;
  color: #000;
}

.node svg {
  width: 16px;
  height: 16px;
}

.node.root { padding-left: 32px; }
.node.sub { padding-left: 48px; }
.node.leaf { padding-left: 56px; }
.node.faded svg { opacity: .6; }
.node.selected { background: #d9d9d9; }

.files {
  flex: 1;
  color: #666;
}

.file-head {
  display: flex;
  align-items: center;
  height: 31px;
  padding: 0 0 6px 365px;
  color: #44546f;
}

.file-head span {
  width: 120px;
  height: 25px;
  line-height: 25px;
  padding-left: 6px;
  border-left: 1px solid #e3e3e3;
}

.file-head span + span {
  width: 73px;
}

.row {
  display: flex;
  align-items: center;
  justify-content: space-between;
  height: 21px;
  padding-left: 372px;
}

.row span + span {
  font-size: 11.1px;
}

.row.selected {
  background: #d9d9d9;
}

.hscroll {
  display: flex;
  align-items: center;
  justify-content: space-between;
  height: 15px;
  margin-top: 4px;
  padding-right: 5px;
  background: #f0f0f0;
}

.hscroll i {
  width: 523px;
  height: 15px;
  background: #cdcdcd;
}

.vscroll {
  display: flex;
  flex-direction: column;
  align-items: center;
  width: 16px;
  height: 370px;
  padding: 5px 0 4px;
  background: #f0f0f0;
}

.vscroll i {
  width: 15px;
  height: 276px;
  margin: 4px 0 auto;
  background: #cdcdcd;
}

.status {
  display: flex;
  align-items: center;
  flex: 1;
  padding-left: 14px;
  color: #2c4160;
  font-size: 11.2px;
}

.status i {
  width: 1px;
  height: 14px;
  margin: 0 10px;
  background: #e3e3e3;
}

.views {
  display: flex;
  align-items: center;
  gap: 4px;
  margin: 0 8px 0 auto;
}

.details {
  width: 22px;
  height: 22px;
  padding: 4px 3px;
  background: #cbe8fa;
  border: 1px solid #3b9cc2;
}

/* update dialog */
.dialog {
  position: absolute;
  left: 412px;
  top: 10px;
  width: 446px;
  height: 648px;
  background: #fff;
  border: 1px solid #888;
}

.dialog-title {
  display: flex;
  align-items: center;
  gap: 5px;
  height: 24px;
  padding-left: 3px;
  color: #888;
  font-size: 11.5px;
}

.app-icon {
  width: 16px;
  height: 16px;
}

.disabled {
  opacity: .2;
}

.dialog h1 {
  margin: 19px 0 0 64px;
  font: bold 17.1px/26px "Open Sans", sans-serif;
  color: #222428;
}

/* tray overflow */
.overflow {
  position: absolute;
  left: 1039px;
  top: 600px;
  width: 80px;
  height: 80px;
  display: grid;
  grid-template-columns: 40px 40px;
  grid-template-rows: 40px 40px;
  place-items: center;
  background: rgba(60,60,60,.9);
}

.overflow svg {
  width: 16px;
  height: 18px;
}

.tray-s {
  font: bold 12px "Open Sans", sans-serif;
  fill: #666;
}

.watermark {
  position: absolute;
  left: 1036px;
  top: 606px;
  width: 200px;
  height: 66px;
  opacity: .6;
  filter: drop-shadow(0 0 2px #888);
}

.watermark text {
  font: 53px Roboto, sans-serif;
  fill: #fff;
}

.watermark path {
  fill: none;
  stroke: #fff;
  stroke-width: 4;
  stroke-linejoin: round;
}

/* taskbar */
.taskbar {
  display: flex;
  height: 40px;
  background: linear-gradient(90deg, #001922, #00101f 50%, #000719);
}

.start {
  display: flex;
  align-items: center;
  justify-content: center;
  width: 48px;
}

.tb-search {
  display: flex;
  align-items: center;
  gap: 9px;
  width: 288px;
  padding: 1px 0 0 13px;
  border: 1px solid #bbb;
  background: #f2f2f2;
  font-size: 13.9px;
  color: #333;
}

.tb-item {
  display: flex;
  align-items: center;
  justify-content: center;
  width: 40px;
  margin-left: 9px;
}

.tb-search + .tb-item { margin-left: 4px; }
.tb-search + .tb-item + .tb-item { margin-left: 11px; }

.running {
  border-bottom: 2px solid #76b9ed;
  padding-top: 2px;
}

.tray {
  display: flex;
  align-items: center;
  gap: 8px;
  margin-left: auto;
  margin-right: 4px;
  padding-right: 20px;
  border-right: 1px solid #555;
}

.clock {
  width: 54px;
  font-size: 11px;
  line-height: 18px;
  color: #fff;
  text-align: center;
}

.notes { margin-left: 8px; }
```
